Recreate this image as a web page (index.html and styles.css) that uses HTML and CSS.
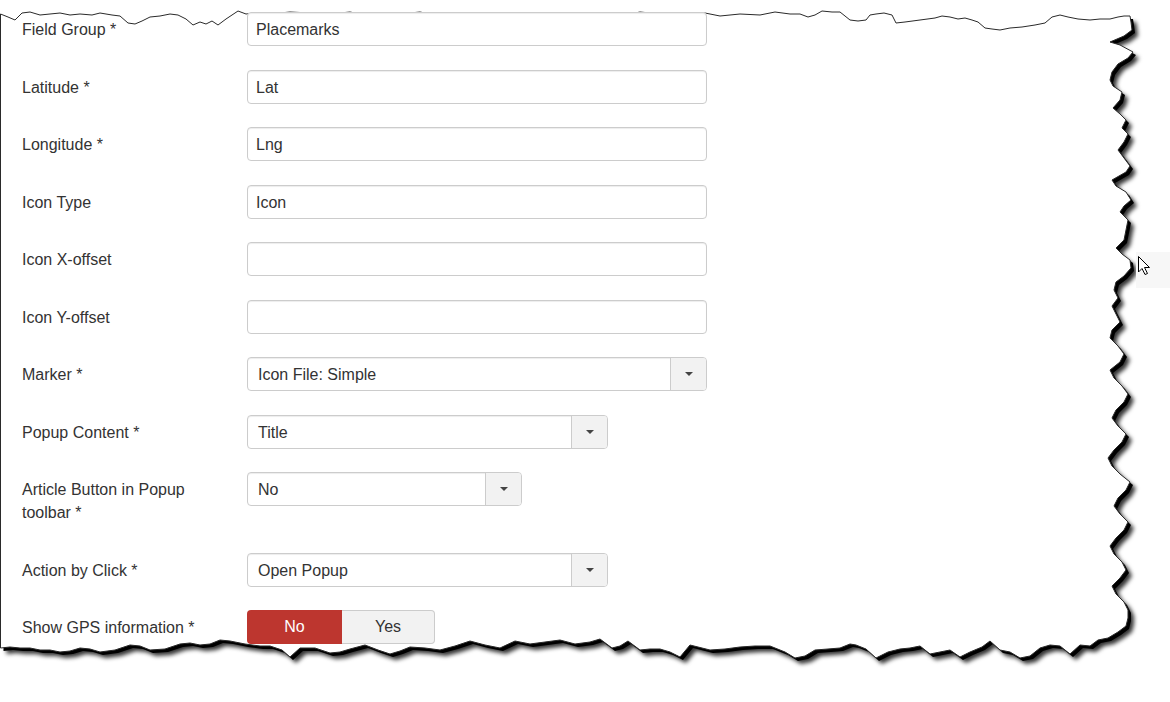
FILE: index.html
```html
<!DOCTYPE html>
<html lang="en">
<head>
    <meta charset="UTF-8">
    <meta name="viewport" content="width=device-width, initial-scale=1.0">
    <title>Placemark fields</title>
    <link rel="stylesheet" href="styles.css">
</head>
<body>
    <div class="sheet">
        <!-- torn paper edge, drawn behind the form -->
        <svg class="torn" width="1170" height="702" viewBox="0 0 1170 702">
            <defs>
                <path id="edge" d="M0.5,14 L8,17 L15,20 L22,13 L30,12 L40,15 L50,14 L60,13 L70,15 L80,14 L92,15 L100,13 L112,15 L120,16 L128,23 L135,24 L142,21 L150,17 L160,16 L170,14 L178,15 L186,19 L193,25 L200,22 L206,24 L212,21 L218,25 L226,19 L232,15 L238,11 L246,14 L255,13 L270,14 L290,12 L310,13 L330,14 L350,12 L365,15 L380,13 L400,14 L420,12 L440,16 L455,13 L470,15 L490,14 L505,18 L515,15 L530,14 L550,16 L565,13 L580,14 L600,17 L612,14 L625,15 L640,12 L660,14 L675,17 L690,15 L705,13 L720,16 L740,14 L760,15 L775,12 L790,14 L800,14 L808,17 L815,15 L822,11 L832,12 L840,12 L850,20 L858,21 L866,20 L870,15 L876,14 L884,13 L892,15 L896,23 L905,22 L920,20 L935,18 L942,16 L950,17 L958,19 L965,18 L972,20 L978,22 L985,28 L992,29 L1000,30 L1010,28 L1022,27 L1035,25 L1045,23 L1052,17 L1060,15 L1068,17 L1078,19 L1090,20 L1100,19 L1110,19 L1118,17 L1124,16 L1130,16
                L1131,22 L1132,30 L1124,36 L1110,42 L1120,45 L1133,52 L1128,58 L1118,64 L1112,72 L1110,80 L1113,86 L1122,92 L1120,100 L1113,108 L1120,114 L1126,120 L1122,128 L1128,134 L1124,142 L1118,150 L1124,158 L1130,166 L1126,172 L1112,180 L1116,186 L1126,192 L1131,200 L1124,206 L1120,212 L1128,220 L1126,230 L1124,240 L1116,248 L1122,254 L1130,260 L1131,268 L1124,276 L1116,282 L1114,290 L1118,298 L1112,306 L1116,314 L1120,322 L1112,330 L1110,338 L1118,346 L1124,354 L1120,362 L1110,370 L1114,378 L1122,386 L1128,394 L1124,402 L1116,410 L1112,418 L1118,426 L1126,434 L1122,442 L1114,450 L1108,458 L1112,466 L1120,474 L1130,482 L1126,490 L1118,498 L1114,506 L1120,514 L1128,522 L1124,530 L1116,538 L1110,546 L1114,554 L1122,562 L1126,570 L1120,578 L1112,586 L1116,594 L1124,602 L1128,610 L1128,618 L1126,626 L1118,632 L1108,638
                L1098,640 L1090,646 L1080,645 L1070,654 L1060,646 L1050,645 L1040,648 L1030,656 L1020,658 L1010,652 L1000,650 L990,641 L982,647 L970,652 L960,657 L950,650 L940,652 L930,654 L920,646 L910,648 L900,649 L888,652 L876,658 L866,649 L856,645 L850,644 L840,648 L828,649 L815,650 L805,656 L795,658 L785,652 L770,646 L755,646 L740,647 L725,649 L710,650 L698,647 L690,645 L680,657 L670,652 L660,649 L650,649 L640,650 L628,641 L620,646 L612,648 L600,639 L590,642 L575,644 L560,640 L545,642 L530,644 L515,641 L500,648 L485,645 L470,641 L455,646 L440,650 L425,648 L410,647 L400,651 L390,654 L378,650 L365,645 L350,649 L340,652 L330,653 L315,648 L300,648 L290,657 L282,650 L270,646 L260,646 L245,644 L230,641 L220,640 L210,644 L200,645 L190,643 L180,644 L165,649 L150,650 L140,646 L130,645 L115,650 L100,652 L90,649 L80,648 L70,651 L60,652 L50,650 L40,650 L30,648 L20,648 L10,647 L0.5,648 Z"/>
                <clipPath id="shadow-area">
                    <rect x="0" y="32" width="1170" height="670"/>
                    <rect x="1104" y="0" width="66" height="702"/>
                </clipPath>
            </defs>
            <g clip-path="url(#shadow-area)">
                <use href="#edge" class="paper-shadow"/>
            </g>
            <use href="#edge" class="paper"/>
        </svg>

        <form class="form">
            <div class="row">
                <label>Field Group *</label>
                <div class="input">Placemarks</div>
            </div>
            <div class="row">
                <label>Latitude *</label>
                <div class="input">Lat</div>
            </div>
            <div class="row">
                <label>Longitude *</label>
                <div class="input">Lng</div>
            </div>
            <div class="row">
                <label>Icon Type</label>
                <div class="input">Icon</div>
            </div>
            <div class="row">
                <label>Icon X-offset</label>
                <div class="input"></div>
            </div>
            <div class="row">
                <label>Icon Y-offset</label>
                <div class="input"></div>
            </div>
            <div class="row">
                <label>Marker *</label>
                <div class="select select-wide">
                    <span class="select-value">Icon File: Simple</span>
                    <span class="select-arrow"><i class="caret"></i></span>
                </div>
            </div>
            <div class="row">
                <label>Popup Content *</label>
                <div class="select select-mid">
                    <span class="select-value">Title</span>
                    <span class="select-arrow"><i class="caret"></i></span>
                </div>
            </div>
            <div class="row">
                <label>Article Button in Popup toolbar *</label>
                <div class="select select-small">
                    <span class="select-value">No</span>
                    <span class="select-arrow"><i class="caret"></i></span>
                </div>
            </div>
            <div class="row">
                <label>Action by Click *</label>
                <div class="select select-mid">
                    <span class="select-value">Open Popup</span>
                    <span class="select-arrow"><i class="caret"></i></span>
                </div>
            </div>
            <div class="row">
                <label>Show GPS information *</label>
                <div class="toggle">
                    <span class="toggle-no">No</span>
                    <span class="toggle-yes">Yes</span>
                </div>
            </div>
        </form>

        <div class="pointer">
            <svg width="14" height="21" viewBox="0 0 14 21">
                <path d="M1.5,1.5 L1.5,17 L5,13.5 L8,19.5 L10.5,18.5 L7.5,12.5 L12.5,12.5 Z" fill="#fff" stroke="#000" stroke-width="1"/>
            </svg>
        </div>
    </div>
</body>
</html>
```

FILE: styles.css
```css
body {
    margin: 0;
    font-family: "Liberation Sans", Arial, sans-serif;
    color: #333;
    background-color: #fff;
}
.sheet {
    position: relative;
    width: 1170px;
    height: 702px;
    overflow: hidden;
}
.torn {
    position: absolute;
    left: 0;
    top: 0;
}
.paper-shadow {
    fill: #000;
    filter: drop-shadow(3px 3px 2px rgba(0, 0, 0, 0.8));
    transform: translate(3px, 3px);
}
.paper {
    fill: #fff;
    stroke: #2a2a2a;
    stroke-width: 1;
}
.form {
    position: relative;
    padding: 12px 0 0 22px;
    margin: 0;
}
.row {
    display: flex;
    align-items: flex-start;
    margin-bottom: 23.5px;
}
.row label {
    width: 225px;
    flex-shrink: 0;
    box-sizing: border-box;
    padding: 6px 20px 5px 0;
    font-size: 16px;
    line-height: 23px;
    color: #333;
}
.input,
.select {
    box-sizing: border-box;
    height: 34px;
    border: 1px solid #ccc;
    border-radius: 4px;
    background-color: #fff;
    box-shadow: inset 0 1px 1px rgba(0, 0, 0, 0.075);
    font-size: 16px;
    line-height: 33px;
    color: #333;
}
.input {
    width: 460px;
    padding: 0 8px;
}
.select {
    display: flex;
    overflow: hidden;
}
.select-wide {
    width: 460px;
}
.select-mid {
    width: 361px;
}
.select-small {
    width: 275px;
}
.select-value {
    flex: 1;
    padding: 0 10px;
}
.select-arrow {
    width: 35px;
    display: flex;
    align-items: center;
    justify-content: center;
    background-color: #f2f2f2;
    border-left: 1px solid #ccc;
}
.caret {
    width: 0;
    height: 0;
    border-top: 4px solid #444;
    border-left: 4px solid transparent;
    border-right: 4px solid transparent;
}
.toggle {
    display: flex;
    height: 34px;
    font-size: 16px;
}
.toggle span {
    box-sizing: border-box;
    display: flex;
    align-items: center;
    justify-content: center;
    height: 34px;
}
.toggle-no {
    width: 95px;
    background-color: #bd362f;
    color: #fff;
    border-radius: 4px 0 0 4px;
}
.toggle-yes {
    width: 93px;
    background-color: #f2f2f2;
    color: #333;
    border: 1px solid #ccc;
    border-left: none;
    border-radius: 0 4px 4px 0;
}
.pointer {
    position: absolute;
    left: 1136px;
    top: 252px;
    width: 34px;
    height: 36px;
    background-color: #f7f7f7;
}
.pointer svg {
    display: block;
    margin: 3px 0 0 1px;
}
```
